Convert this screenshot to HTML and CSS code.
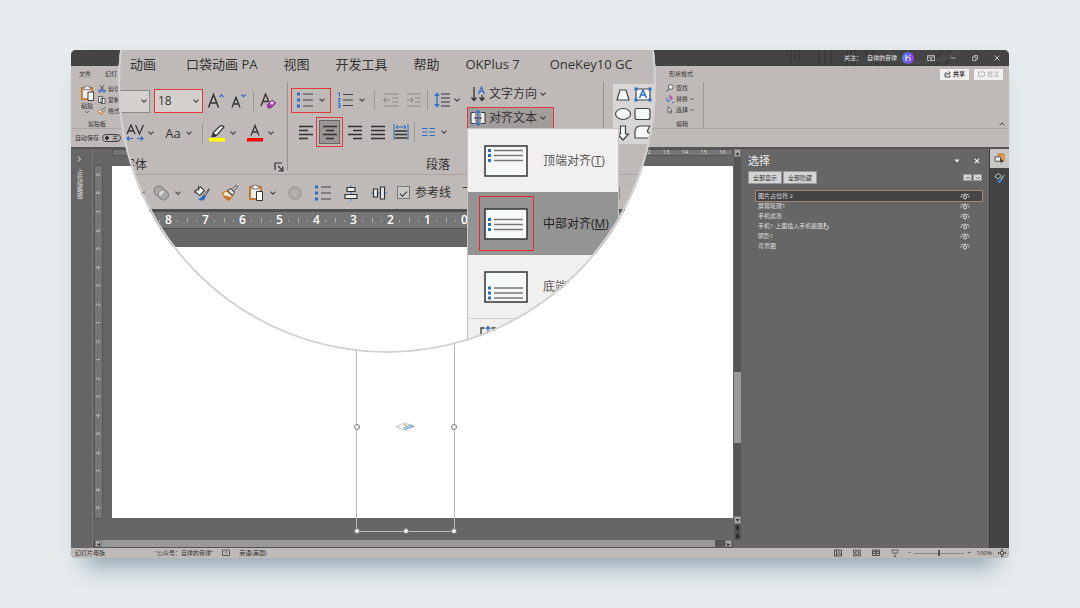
FILE: index.html
```html
<!DOCTYPE html>
<html lang="zh-CN">
<head>
<meta charset="utf-8">
<title>幻灯片母版</title>
<link rel="stylesheet" href="styles.css">
</head>
<body>
<svg class="defs" aria-hidden="true">
  <symbol id="chev" viewBox="0 0 6 6"><path d="M.5 1.700 3 4.200 5.500 1.700" fill="none" stroke="#444" stroke-width="1.200"/></symbol>
  <symbol id="eye" viewBox="0 0 10 7"><path d="M.6 4.500C2.500 0 7.500 0 9.400 4.500M2.500 2 1.500 1M7.500 2l1-1" fill="none" stroke="#ddd" stroke-width=".9"/><circle cx="5" cy="4.300" r="1.600" fill="none" stroke="#ddd" stroke-width="1"/></symbol>
  <symbol id="lines-l" viewBox="0 0 16 16"><path d="M1 2.500h14M1 6.500h9M1 10.500h14M1 14.500h9" stroke="#333" stroke-width="1.300"/></symbol>
  <symbol id="lines-c" viewBox="0 0 16 16"><path d="M1 2.500h14M4 6.500h8M1 10.500h14M4 14.500h8" stroke="#333" stroke-width="1.300"/></symbol>
  <symbol id="lines-r" viewBox="0 0 16 16"><path d="M1 2.500h14M6 6.500h9M1 10.500h14M6 14.500h9" stroke="#333" stroke-width="1.300"/></symbol>
  <symbol id="lines-j" viewBox="0 0 16 16"><path d="M1 2.500h14M1 6.500h14M1 10.500h14M1 14.500h14" stroke="#333" stroke-width="1.300"/></symbol>
  <symbol id="bul" viewBox="0 0 16 16"><path d="M0 .5h3v3H0zM0 6.500h3v3H0zM0 12.500h3v3H0z" fill="#2b6cc4"/><path d="M6 2h10M6 8h10M6 14h10" stroke="#444" stroke-width="1.200"/></symbol>
  <symbol id="pastei" viewBox="0 0 16 18"><path d="M2 3h11v12H2z" fill="#eee" stroke="#c47a2e" stroke-width="2"/><path d="M4 2h2q1.500-3 3 0h2v3H4z" fill="#eee" stroke="#555" stroke-width=".8"/><path d="M8.500 7.500h6v9h-6z" fill="#f4f8f7" stroke="#333"/></symbol>
  <symbol id="brushi" viewBox="0 0 16 16"><path d="m.5 7.500 4.500-1.500 5.500 5-3.500 4.500Q2 13 .5 7.500z" fill="#f6e7d4" stroke="#c47a2e" stroke-width="1.200"/><path d="m2 10.500 7.500 1.500-2.500 3.500Q3 14 2 10.500z" fill="#c9752a"/><path d="m5.500 5.500 5 5 2-3-3.500-4z" fill="#ddd" stroke="#333"/><path d="m10 4.500 4-4 1.500 1.500-4 4z" fill="#eee" stroke="#333"/></symbol>
  <symbol id="filli" viewBox="0 0 17 17"><path d="m2 6 5-4 4 4-5 5-4-3z" fill="#eef2f2" stroke="#333" stroke-width="1.100"/><path d="M5 1v5M1 5v4" stroke="#333"/><path d="m16 4-6 7 2 1 4-7z" fill="#ddd" stroke="#333" stroke-width=".9"/><path d="M12 13c-1-3-3-2-4 0s-2 2-3 2q5 3 7-2z" fill="#2b6cc4" stroke="#2b6cc4"/></symbol>
</svg>

<main class="app">
  <header class="titlebar">
    <svg class="deco" viewBox="0 0 180 16" aria-hidden="true"><path d="M2 0v8M6 0v13M10 0v9M14 0v11M34 0v16M40 0v16M46 0v16M62 0v16M66 0v14M70 0v16" stroke="#3a3a3a" stroke-width="2"/><path d="m78 0 16 16M86 0l16 16M142 16l16-16M150 16l16-16M158 16l16-16" stroke="#3c3c3c" stroke-width="3"/><path d="M104 0q8 14 34 12T174 0" fill="none" stroke="#4a4a4a" stroke-width="4"/></svg>
    <span>关注：</span><span>自律的音律</span>
    <span class="avatar"><svg viewBox="0 0 12 12"><path d="M4 3v6M4 6q3-2 4 0v3M8 4V3" stroke="#fff" fill="none"/></svg></span>
    <nav class="winctl">
      <button aria-label="功能区选项"><svg viewBox="0 0 8 8"><path d="M.5 1.500h7v5h-7zM.5 3h7M4 6V4M3 5l1-1 1 1" fill="none" stroke="#ccc" stroke-width=".8"/></svg></button>
      <button aria-label="最小化"><svg viewBox="0 0 8 8"><path d="M1.500 4h5" stroke="#ccc" stroke-width=".8"/></svg></button>
      <button aria-label="还原"><svg viewBox="0 0 8 8"><path d="M1.500 3h3.500v3.500H1.500zM3 3V1.500h3.500V5H5" fill="none" stroke="#ccc" stroke-width=".8"/></svg></button>
      <button aria-label="关闭"><svg viewBox="0 0 8 8"><path d="m1.500 1.500 5 5m0-5-5 5" stroke="#ddd" stroke-width=".8"/></svg></button>
    </nav>
  </header>

  <nav class="tabs">
    <div class="tabs-left"><button>文件</button><button>幻灯</button></div>
    <button class="tab-format">形状格式</button>
    <div class="share">
      <button><svg viewBox="0 0 7 7"><path d="M3 2H1v4h5V4M2.500 4.500Q3 2 6 2M4.500.5 6.300 2 4.500 3.500" fill="none" stroke="#333" stroke-width=".8"/></svg><b>共享</b></button>
      <button class="off"><svg viewBox="0 0 7 7"><path d="M.5 1h6v4H3L2 6.300V5H.5z" fill="none" stroke="#aaa" stroke-width=".8"/></svg>批注</button>
    </div>
  </nav>

  <section class="ribbon">
    <div class="clip">
      <button class="paste"><svg viewBox="0 0 16 18"><use href="#pastei"/></svg>粘贴<svg class="c4"><use href="#chev"/></svg></button>
      <div class="clip-list">
        <button><svg viewBox="0 0 8 8"><path d="m2 0 3 5M6 0 3 5" stroke="#444" stroke-width=".8"/><circle cx="2" cy="6" r="1.300" fill="none" stroke="#2b6cc4"/><circle cx="6" cy="6" r="1.300" fill="none" stroke="#2b6cc4"/></svg>剪切</button>
        <button><svg viewBox="0 0 8 8"><path d="M.5.5h4v6h-4zM3 2.500h4v5H3z" fill="#eee" stroke="#444" stroke-width=".8"/></svg>复制</button>
        <button><svg viewBox="0 0 16 16"><use href="#brushi"/></svg>格式</button>
      </div>
      <span class="gl">剪贴板</span>
    </div>
    <div class="edit">
      <button><svg viewBox="0 0 8 8"><circle cx="4.800" cy="3" r="2.400" fill="#eee" stroke="#444" stroke-width=".8"/><path d="M3 5 .5 7.500" stroke="#444"/></svg>查找</button>
      <button><svg viewBox="0 0 8 8"><path d="M4 0v4h2V2H4" fill="none" stroke="#a33fa5"/><path d="M1 3v3h3M6 7.500H8" fill="none" stroke="#2b6cc4"/></svg>替换 <svg class="c4"><use href="#chev"/></svg></button>
      <button><svg viewBox="0 0 8 8"><path d="M2 .5v6l1.500-1 1 2 1-.5-1-2H6z" fill="#eee" stroke="#444" stroke-width=".8"/></svg>选择 <svg class="c4"><use href="#chev"/></svg></button>
      <span class="gl">编辑</span>
    </div>
    <button class="fold" aria-label="折叠功能区"><svg viewBox="0 0 6 6"><path d="M.5 4.300 3 1.800l2.500 2.500" fill="none" stroke="#444"/></svg></button>
  </section>

  <div class="autosave"><label for="as">自动保存</label><input type="checkbox" id="as" class="toggle"><span class="togtext">关</span></div>

  <section class="work">
    <aside class="thumbs"><button aria-label="展开"><svg viewBox="0 0 5 6"><path d="m1 .5 2.500 2.500L1 5.500" fill="none" stroke="#eee"/></svg></button><span>占位缩略图</span></aside>
    <div class="stage">
      <div class="hruler" id="hr"></div>
      <div class="vruler" id="vr"></div>
      <div class="slide"></div>
      <div class="vscroll"><button aria-label="上">▴</button><i></i><button aria-label="下">▾</button><button class="pg" aria-label="上一张">⬆</button><button class="pg" aria-label="下一张">⬇</button></div>
      <div class="hscroll"><button aria-label="左">◂</button><i></i><button aria-label="右">▸</button></div>
      <div class="selbox"><b class="ml"></b><b class="mr"></b><b class="bl s"></b><b class="bm s"></b><b class="br s"></b>
        <svg viewBox="0 0 20 9"><path d="M1 4.500 10 .8l9 3.700-9 3.700z" fill="none" stroke="#bbb" stroke-width=".8"/><path d="m9 6 6-3 4 1.500-5 1-4 2z" fill="#cfe0f2" stroke="#5b93cf" stroke-width=".8"/><path d="m8 2 4 1.500-2 .5" stroke="#e3b36b" fill="none"/></svg></div>
    </div>
    <aside class="pane">
      <div class="pane-head"><h2>选择</h2><button aria-label="选项"><svg viewBox="0 0 6 6"><path d="M.5 1.500h5L3 4.500z" fill="#eee"/></svg></button><button aria-label="关闭"><svg viewBox="0 0 6 6"><path d="m.8.8 4.400 4.400m0-4.400L.8 5.200" stroke="#eee" stroke-width="1.200"/></svg></button></div>
      <div class="pane-btns"><button>全部显示</button><button>全部隐藏</button><span></span><button class="sm" aria-label="上移"><svg viewBox="0 0 6 6"><path d="m1 4 2-2 2 2" fill="none" stroke="#777"/></svg></button><button class="sm" aria-label="下移"><svg viewBox="0 0 6 6"><path d="m1 2 2 2 2-2" fill="none" stroke="#777"/></svg></button></div>
      <ul class="objs">
        <li class="on">图片占位符 2<svg><use href="#eye"/></svg></li>
        <li>屏幕轮廓1<svg><use href="#eye"/></svg></li>
        <li>手机遮罩<svg><use href="#eye"/></svg></li>
        <li><span class="hand">手机1-上面插入手机截图<svg viewBox="0 0 6 8"><path d="M1.500 5V1q.7-.8 1.200 0v2.500l2.500.8V6.500L4.500 7.500h-2L.7 5z" fill="none" stroke="#ddd" stroke-width=".8"/></svg></span><svg><use href="#eye"/></svg></li>
        <li>阴影1<svg><use href="#eye"/></svg></li>
        <li>背景图<svg><use href="#eye"/></svg></li>
      </ul>
    </aside>
    <aside class="rail">
      <button class="on" aria-label="选择窗格"><svg viewBox="0 0 10 10"><path d="M4 1h5v6H4z" fill="#e8a04c" stroke="#c47a2e"/><path d="M1 3.500h5v4H1z" fill="#eee" stroke="#444" stroke-width=".8"/><path d="m6 5 3 3-2 .2-1 1.300z" fill="#333"/></svg></button>
      <button aria-label="设置格式"><svg viewBox="0 0 17 17"><path d="m2 6 5-4 4 4-5 5-4-3z" fill="none" stroke="#ddd" stroke-width="1.300"/><path d="m16 4-6 7 2 1 4-7z" fill="#ddd"/><path d="M12 13c-1-3-3-2-4 0s-2 2-3 2q5 3 7-2z" fill="#3c8ad8" stroke="#3c8ad8"/></svg></button>
    </aside>
  </section>

  <footer class="status">
    <span class="st1">幻灯片母版</span><span>“公众号：自律的音律”</span>
    <svg viewBox="0 0 8 8"><path d="M.5 1h3l.5.500.5-.5h3v5.500h-7zM4 2v3" fill="none" stroke="#444" stroke-width=".8"/></svg><span>英语(美国)</span>
    <div class="views">
      <button aria-label="普通"><svg viewBox="0 0 8 8"><path d="M.5 1h7v6h-7zM2.500 1v6M2.500 5h5M4 3h2" fill="none" stroke="#444" stroke-width=".9"/></svg></button>
      <button aria-label="浏览"><svg viewBox="0 0 8 8"><path d="M.5 1h2.700v2.300H.5zM4.800 1h2.700v2.300H4.800zM.5 4.800h2.700V7H.5zM4.800 4.800h2.700V7H4.800z" fill="none" stroke="#444" stroke-width=".8"/></svg></button>
      <button aria-label="阅读"><svg viewBox="0 0 8 8"><path d="M.5 1h7v5.500h-7zM4 1v6M1 2.700h6M1 4.300h6" fill="none" stroke="#444" stroke-width=".9"/></svg></button>
      <button aria-label="放映"><svg viewBox="0 0 8 8"><path d="M.5 1h7M1.200 1v3h5.600V1M4 4v3.500M2.500 7.500h3" fill="none" stroke="#555" stroke-width=".8"/></svg></button>
    </div>
    <div class="zoom"><span>−</span><input type="range" aria-label="缩放"><span>+</span><span class="pct">100%</span>
      <svg viewBox="0 0 8 8"><path d="M2.500 2.500h3v3h-3zM4 0v2M4 6v2M0 4h2M6 4h2M3 1l1-1 1 1M3 7l1 1 1-1M1 3 0 4l1 1M7 3l1 1-1 1" fill="none" stroke="#444" stroke-width=".8"/></svg></div>
  </footer>

  <section class="lens">
    <nav class="l-tabs"><span>动画</span><span class="gapped">口袋动画 PA</span><span>视图</span><span>开发工具</span><span>帮助</span><span>OKPlus 7</span><span class="gapped">OneKey10 GC</span></nav>
    <div class="l-ribbon">
      <div class="g-font">
        <div class="row r1">
          <button class="fname" aria-label="字体"><svg class="c"><use href="#chev"/></svg></button>
          <button class="fsize red"><span>18</span><svg class="c"><use href="#chev"/></svg></button>
          <button class="w18" aria-label="增大字号"><svg viewBox="0 0 18 18"><path d="m1.500 15.500 5-13 5 13M3.300 11h6.400" fill="none" stroke="#333" stroke-width="1.500"/><path d="m12.500 5 2-2.200 2 2.200" fill="none" stroke="#2b6cc4" stroke-width="1.200"/></svg></button>
          <button class="w20" aria-label="减小字号"><svg viewBox="0 0 18 18"><path d="m2 15.500 4-10 4 10M3.500 12h5" fill="none" stroke="#333" stroke-width="1.400"/><path d="m11.500 2.500 2 2.200 2-2.200" fill="none" stroke="#2b6cc4" stroke-width="1.200"/></svg></button>
          <i class="sep"></i>
          <button class="w20" aria-label="清除格式"><svg viewBox="0 0 18 18"><path d="m2 14 4.500-12L10 10M4 9.500h5" fill="none" stroke="#333" stroke-width="1.400"/><path d="m8 13 5-5 4 3-5 5H9z" fill="#a33fa5" stroke="#873a8c"/><path d="m11 11 2-2 2 2-2 2z" fill="#f0dff2"/></svg></button>
        </div>
        <div class="row r2">
          <button class="tool"><svg viewBox="0 0 18 18"><path d="m1 10 4-9 4 9M2.500 7h5M9.500 1l4 9 4-9" fill="none" stroke="#333" stroke-width="1.300"/><path d="M1 14.500h6M3 12.500l-2 2 2 2M11 14.500h6M15 12.500l2 2-2 2" fill="none" stroke="#2b6cc4" stroke-width="1.200"/></svg><svg class="c"><use href="#chev"/></svg></button>
          <button class="tool"><span class="aa">Aa</span><svg class="c"><use href="#chev"/></svg></button>
          <i class="sep"></i>
          <button class="tool"><svg viewBox="0 0 18 18"><path d="M1 14h16v3.500H1z" fill="#ff0"/><path d="m5 9 7-7q3-1 4 1l-7 8-3 1z" fill="#eee" stroke="#333" stroke-width="1.300"/><path d="m5 9-2 4h4l2-2z" fill="#333"/></svg><svg class="c"><use href="#chev"/></svg></button>
          <button class="tool"><svg viewBox="0 0 18 18"><path d="M1 14h16v3.500H1z" fill="#f00"/><path d="m5 11.500 4-10 4 10M6.300 8h5.400" fill="none" stroke="#333" stroke-width="1.300"/></svg><svg class="c"><use href="#chev"/></svg></button>
        </div>
        <div class="row r3"><span>字体</span><button aria-label="字体设置"><svg viewBox="0 0 10 10"><path d="M1 8V1h7M4 4l4.500 4.500M8.800 4.500V9H4.500" fill="none" stroke="#333" stroke-width="1.200"/></svg></button></div>
      </div>
      <div class="g-para">
        <div class="p-left">
          <div class="row r1">
            <button class="bullets red"><svg viewBox="0 0 16 16"><use href="#bul"/></svg><svg class="c"><use href="#chev"/></svg></button>
            <button class="numb"><svg viewBox="0 0 16 16"><path d="M1 1h1.500v3.500M1 6.500h2v1.500l-2 1.500h2M1 11.500h2v4H1m0-2h2" fill="none" stroke="#2b6cc4"/><path d="M6 2.500h10M6 8h10M6 13.500h10" stroke="#444" stroke-width="1.200"/></svg><svg class="c"><use href="#chev"/></svg></button>
            <i class="sep"></i>
            <button class="w23" aria-label="减少缩进"><svg viewBox="0 0 16 16"><path d="M1 2h14M9 6h6M9 10h6M1 14h14M7 8H1m2-2L1 8l2 2" fill="none" stroke="#8d8a88" stroke-width="1.200"/></svg></button>
            <button class="w23" aria-label="增加缩进"><svg viewBox="0 0 16 16"><path d="M1 2h14M9 6h6M9 10h6M1 14h14M1 8h6M5 6l2 2-2 2" fill="none" stroke="#8d8a88" stroke-width="1.200"/></svg></button>
            <i class="sep"></i>
            <button class="ls"><svg viewBox="0 0 16 16"><path d="M3 1v14M.8 4 3 1.500 5.200 4M.8 12 3 14.500 5.200 12" fill="none" stroke="#2b6cc4" stroke-width="1.200"/><path d="M7 2h9M7 6h9M7 10h9M7 14h9" stroke="#333" stroke-width="1.200"/></svg><svg class="c"><use href="#chev"/></svg></button>
          </div>
          <div class="row r2">
            <button class="w20" aria-label="左对齐"><svg><use href="#lines-l"/></svg></button>
            <button class="centre red" aria-label="居中"><span><svg><use href="#lines-c"/></svg></span></button>
            <button class="w23" aria-label="右对齐"><svg><use href="#lines-r"/></svg></button>
            <button class="w23" aria-label="两端对齐"><svg><use href="#lines-j"/></svg></button>
            <button class="w23" aria-label="分散对齐"><svg viewBox="0 0 16 16"><path d="M1 0v16M15 0v16M3 3h10M5 1 3 3l2 2M11 1l2 2-2 2" fill="none" stroke="#2b6cc4"/><path d="M2 7h12M2 10.500h12M2 14h12" stroke="#333" stroke-width="1.300"/></svg></button>
            <i class="sep"></i>
            <button class="cols"><svg viewBox="0 0 16 16"><path d="M1 4.500h5.500M1 8h5.500M1 11.500h5.500M8.500 4.500H14M8.500 8H14M8.500 11.500H14" stroke="#2b6cc4" stroke-width="1.200"/></svg><svg class="c"><use href="#chev"/></svg></button>
          </div>
          <div class="row r3"><span>段落</span></div>
        </div>
        <div class="p-right">
          <button class="tdir"><svg viewBox="0 0 16 16"><path d="M4 1v13M1.500 11.500 4 14.500l2.500-3M12 9v5M9.500 11.500l2.500 3 2.500-3" fill="none" stroke="#333" stroke-width="1.300"/><path d="m8.500 8 3-7 3 7M9.500 5.500h4" fill="none" stroke="#2b6cc4" stroke-width="1.200"/></svg>文字方向<svg class="c"><use href="#chev"/></svg></button>
          <button class="talign red"><svg viewBox="0 0 16 16"><path d="M5 3H1v10h4zM11 3h4v10h-4z" fill="#eee"/><path d="M4.500 2.500H1v11h3.500M11.500 2.500H15v11h-3.500M4 8h8" fill="none" stroke="#333"/><path d="M8 0v16M5.800 3 8 .7 10.200 3M5.800 13 8 15.300l2.200-2.300" fill="none" stroke="#2b6cc4" stroke-width="1.200"/></svg>对齐文本<svg class="c"><use href="#chev"/></svg></button>
        </div>
      </div>
      <div class="g-shape"><svg viewBox="0 0 42 60"><g fill="#f4f8f7" stroke="#444" stroke-width="1.200"><path d="m4 16 3-10h6l3 10z"/><path d="M23 5h14v11H23z"/><ellipse cx="10" cy="30" rx="7.500" ry="5.500"/><rect x="22" y="24.500" width="15" height="11" rx="2"/><path d="M7.500 42h5v8h3L10 56l-5.500-6h3z"/><path d="M22 54V47q1-5 5-5h10q-5 7 0 7v5z"/></g><path d="m26.500 14 3.500-8 3.500 8m-6-3h5" fill="none" stroke="#2b6cc4" stroke-width="1.500"/><path d="M21.500 3.500h3v3h-3zM35.500 3.500h3v3h-3zM21.500 14.500h3v3h-3zM35.500 14.500h3v3h-3z" fill="#2b6cc4"/></svg></div>
    </div>
    <div class="l-quick">
      <svg class="c"><use href="#chev"/></svg>
      <button class="q"><svg viewBox="0 0 16 16"><circle cx="6" cy="6" r="5" fill="#aaa7a5" stroke="#7d7a78"/><circle cx="10.500" cy="10" r="5" fill="#aaa7a5" stroke="#7d7a78"/><path d="M10.800 5q.5 4-4.800 6-1-5 4.800-6z" fill="#ddd"/></svg><svg class="c"><use href="#chev"/></svg></button>
      <button class="q1"><svg><use href="#filli"/></svg></button>
      <button class="q1"><svg><use href="#brushi"/></svg></button>
      <button class="q tall"><svg><use href="#pastei"/></svg><svg class="c"><use href="#chev"/></svg></button>
      <button class="q1"><svg viewBox="0 0 16 16"><circle cx="8" cy="8" r="5.500" fill="#b5b1ae" stroke="#a5a2a0" stroke-width="3"/></svg></button>
      <button class="q1"><svg><use href="#bul"/></svg></button>
      <button class="q1"><svg viewBox="0 0 16 16"><path d="M8 0v16" stroke="#3c86d8"/><path d="M4 2.500h8v4H4zM2 9.500h12v4H2z" fill="#eee" stroke="#333" stroke-width="1.200"/></svg></button>
      <button class="q1"><svg viewBox="0 0 16 16"><path d="M0 8h16" stroke="#3c86d8"/><path d="M2.500 4h4v8h-4zM9.500 2h4v12h-4z" fill="#eee" stroke="#333" stroke-width="1.200"/></svg></button>
      <label class="guide"><input type="checkbox" checked>参考线</label><span class="next">下</span><i class="bar"></i>
    </div>
    <div class="l-ruler"><b>8</b><b>7</b><b>6</b><b>5</b><b>4</b><b>3</b><b>2</b><b>1</b><b>0</b></div>
    <div class="l-gap"></div>
    <div class="menu">
      <button><svg viewBox="0 0 44 32"><path d="M1 1h42v30H1z" fill="#f4f9f8" stroke="#333" stroke-width="1.500"/><path d="M10 5.500h29M10 10.500h29M10 15.500h29" stroke="#777" stroke-width="1.500"/><path d="M4 4h3v3H4zM4 9h3v3H4zM4 14h3v3H4z" fill="#2b6cc4"/></svg><span>顶端对齐(<u>T</u>)</span></button>
      <button class="on"><svg viewBox="0 0 44 32"><path d="M1 1h42v30H1z" fill="#f4f9f8" stroke="#333" stroke-width="1.500"/><path d="M10 11.500h29M10 16.500h29M10 21.500h29" stroke="#777" stroke-width="1.500"/><path d="M4 10h3v3H4zM4 15h3v3H4zM4 20h3v3H4z" fill="#2b6cc4"/></svg><span>中部对齐(<u>M</u>)</span></button>
      <button><svg viewBox="0 0 44 32"><path d="M1 1h42v30H1z" fill="#f4f9f8" stroke="#333" stroke-width="1.500"/><path d="M10 17h29M10 22h29M10 27h29" stroke="#777" stroke-width="1.500"/><path d="M4 15.500h3v3H4zM4 20.500h3v3H4zM4 25.500h3v3H4z" fill="#2b6cc4"/></svg><span>底端对齐</span></button>
      <button class="more" aria-label="其他选项"><svg viewBox="0 0 16 16"><path d="M4.500 2H1v12h3.500M11.500 2H15v12h-3.500" fill="none" stroke="#333" stroke-width="1.300"/><path d="M8 0v16M5.800 3 8 .7 10.200 3" fill="none" stroke="#2b6cc4" stroke-width="1.300"/></svg></button>
    </div>
  </section>
</main>
<script src="rulers.js"></script>
</body>
</html>
```
FILE: rulers.js
```js
// Marks below `from` stay blank: the lens covers that part of the ruler.
function fillRuler(id, max, from) {
  const ruler = document.getElementById(id);
  for (let n = -max; n <= max; n++) {
    const mark = document.createElement('span');
    if (n >= from) mark.textContent = Math.abs(n);
    ruler.appendChild(mark);
  }
}
fillRuler('hr', 16, 12);
fillRuler('vr', 9, -9);
```
FILE: styles.css
```css
*, *::before, *::after { box-sizing: border-box; }
body {
  margin: 0;
  padding: 50px 71px;
  min-height: 100vh;
  background: #e6ebee;
  font-family: "Open Sans", "Noto Sans CJK SC", sans-serif;
  font-size: 6px;
  line-height: 8px;
  color: #333;
}
button { font: inherit; color: inherit; background: none; border: 0; padding: 0; margin: 0; display: flex; align-items: center; }
svg { display: block; flex: none; }
.defs { position: absolute; width: 0; height: 0; }
.c { width: 6px; height: 6px; }
.c4 { width: 4px; height: 4px; }

.app {
  position: relative;
  display: flex;
  flex-direction: column;
  min-height: calc(100vh - 100px);
  border-radius: 5px;
  overflow: hidden;
  background: #666;
}
body::before {
  content: "";
  position: absolute;
  z-index: -1;
  inset: 60px 84px 52px;
  border-radius: 5px;
  box-shadow: 0 10px 24px #8fa0ab;
}

.titlebar { position: relative; display: flex; align-items: center; justify-content: flex-end; gap: 5px; height: 16px; background: #444; color: #eee; padding-right: 8px; }
.deco { position: absolute; right: 44px; top: 0; width: 180px; height: 16px; }
.titlebar > span { position: relative; }
.avatar { width: 12px; height: 12px; border-radius: 50%; background: linear-gradient(100deg, #3d8bf5, #a333e8); }
.winctl { position: relative; display: flex; gap: 14px; padding-left: 8px; }
.winctl svg { width: 8px; height: 8px; }

.tabs, .ribbon { display: grid; grid-template-columns: 47px 538px 1fr; background: #bfbab7; }
.tabs { grid-template-columns: 47px 551px auto 1fr; height: 16px; align-items: center; }
.tabs-left { display: flex; gap: 14px; padding-left: 8px; }
.tabs-left button { flex: none; }
.tab-format { grid-column: 3; }
.share { display: flex; justify-content: flex-end; gap: 5px; padding-right: 6px; }
.share button { background: #f1f0ef; height: 11px; padding: 0 4px; gap: 2px; }
.share .off { color: #aaa; }
.share svg { width: 7px; height: 7px; }

.ribbon { height: 47px; border-bottom: 1px solid #aaa6a3; position: relative; }
.clip { display: grid; grid-template-columns: 22px 1fr; grid-template-rows: 36px 1fr; padding: 2px 0 0 5px; }
.paste { flex-direction: column; padding-top: 1px; }
.paste > svg:first-child { width: 15px; height: 17px; }
.clip-list { display: flex; flex-direction: column; gap: 3px; padding-top: 1px; }
.clip-list button, .edit button { gap: 2px; white-space: nowrap; height: 8px; }
.clip-list svg, .edit button > svg:first-child { width: 8px; height: 8px; }
.gl { grid-column: 1 / -1; text-align: center; padding-right: 2px; }
.edit { grid-column: 3; justify-self: start; display: flex; flex-direction: column; gap: 3px; width: 48px; margin-bottom: 2px; padding: 2px 0 0 10px; border-right: 1px solid #9d9997; }
.edit .gl { text-align: left; padding: 3px 0 0 10px; }
.fold { position: absolute; right: 4px; bottom: 1px; }
.fold svg { width: 6px; height: 6px; }

.autosave { display: flex; align-items: center; gap: 3px; height: 20px; padding-left: 4px; background: #bfbab7; border-bottom: 2px solid #555; }
.toggle { appearance: none; width: 19px; height: 8px; margin: 0; border: 1px solid #444; border-radius: 4px; background: radial-gradient(circle at 4px 3px, #333 2px, transparent 2px); }
.togtext { margin-left: -12px; }

.work { flex: 1; display: grid; grid-template-columns: 22px 1fr 247px 20px; color: #ddd; }
.thumbs { display: flex; flex-direction: column; align-items: center; gap: 7px; padding: 7px 4px 0 0; border-right: 1px solid #777; }
.thumbs svg { width: 5px; height: 6px; }
.thumbs span { writing-mode: vertical-rl; }

.stage { position: relative; display: grid; grid-template-columns: 19px 1fr 9px; grid-template-rows: 17px 1fr 22px 8px; }
.hruler { grid-area: 1 / 2; display: flex; height: 7px; background: #757575; border: 1px solid #555; line-height: 5px; }
.hruler span { flex: 1; text-align: center; }
.vruler { grid-area: 2 / 1; display: flex; flex-direction: column-reverse; margin-left: 2px; width: 7px; background: #757575; outline: 1px solid #555; }
.vruler span { flex: 1; writing-mode: vertical-rl; transform: rotate(180deg); text-align: center; line-height: 7px; }
.slide { grid-area: 2 / 2; background: #fff; }
.vscroll { grid-area: 1 / 3 / 4 / 4; display: grid; grid-template-rows: 8px 1fr 8px 8px 8px; margin: 0 1px; background: #555; }
.vscroll i { background: #999; align-self: end; height: 71px; margin-bottom: 73px; }
.vscroll button, .hscroll button { background: #aaa; color: #222; justify-content: center; border: 1px solid #777; line-height: 4px; overflow: hidden; }
.vscroll .pg { background: none; border: 0; }
.hscroll { grid-area: 4 / 1 / 5 / 3; display: grid; grid-template-columns: 7px 1fr 10px 7px; padding: 0 1px 1px 2px; background: #555; }
.hscroll i { background: #999; }
.hscroll button:last-child { grid-column: 4; }
.selbox { position: absolute; left: 263px; top: 180px; bottom: 16px; width: 99px; border: 1px solid #bbb; border-top: 0; }
.selbox svg { position: absolute; left: 38px; top: 93px; width: 20px; height: 9px; }
.selbox b { position: absolute; width: 6px; height: 6px; border-radius: 50%; border: 1px solid #777; background: #fff; }
.selbox .ml { left: -3px; top: 95px; }
.selbox .mr { right: -3px; top: 95px; }
.selbox .s { bottom: -3px; }
.selbox .bl { left: -3px; }
.selbox .bm { left: 46px; }
.selbox .br { right: -3px; }

.pane { padding: 5px 7px 0 6px; }
.pane-head { display: flex; align-items: center; gap: 14px; padding-right: 2px; }
.pane-head h2 { flex: 1; margin: 0; font-size: 11px; line-height: 14px; font-weight: 400; color: #eee; }
.pane-head svg { width: 6px; height: 6px; }
.pane-btns { display: flex; align-items: center; gap: 1px; margin-top: 3px; }
.pane-btns button { height: 13px; padding: 0 4px; background: #d4d4d4; color: #333; border: 1px solid #999; }
.pane-btns span { flex: 1; }
.pane-btns .sm { width: 9px; height: 7px; padding: 0; justify-content: center; }
.sm svg { width: 6px; height: 6px; }
.objs { list-style: none; margin: 7px 0 0 8px; padding: 0; line-height: 10px; font-size: 6px; }
.objs li { display: flex; align-items: center; justify-content: space-between; height: 10px; padding: 0 12px 0 2px; }
.objs .on { background: #444; outline: 1px solid #a58673; }
.objs svg { width: 10px; height: 7px; }
.hand { display: flex; align-items: center; }
.hand svg { width: 6px; height: 8px; }
.rail { background: #444; border-left: 1px solid #3c3c3c; }
.rail button { width: 100%; height: 19px; justify-content: center; }
.rail .on { background: #c9c6c4; }
.rail svg { width: 11px; height: 11px; }

.status { display: flex; align-items: center; height: 10px; gap: 9px; padding: 0 3px 0 4px; background: #bfbab7; }
.status svg { width: 8px; height: 8px; }
.st1 { margin-right: 41px; }
.views { display: flex; gap: 11px; margin-left: auto; }
.zoom { display: flex; align-items: center; gap: 3px; }
.zoom input { appearance: none; width: 50px; height: 7px; margin: 0; background: linear-gradient(#888, #888) center / 100% 1px no-repeat; }
.zoom input::-webkit-slider-thumb { appearance: none; width: 2px; height: 6px; background: #555; }
.pct { padding: 0 3px; }

.lens {
  position: absolute;
  left: 47px;
  top: 0;
  width: 538px;
  height: 304px;
  clip-path: circle(269px at 269px 34px);
  background: #fff;
  font-size: 12px;
  line-height: 16px;
}
.lens::after { content: ""; position: absolute; left: 0; top: -235px; width: 538px; height: 538px; border: 2px solid #d2d2d2; border-radius: 50%; pointer-events: none; }
.l-tabs { display: flex; gap: 26px; padding: 6px 0 10px 12px; background: #bfbab7; font-size: 13px; white-space: nowrap; }
.gapped { margin-left: 4px; }
.l-ribbon { display: flex; height: 93px; background: #bfbab7; border-bottom: 1px solid #a8a4a1; }
.l-ribbon svg:not(.c) { width: 16px; height: 16px; }
.row { display: flex; align-items: center; }
.row button { justify-content: center; }
.r1 { height: 24px; margin-top: 7px; }
.r2 { height: 29px; margin-top: 5px; }
.r3 { height: 16px; margin-top: 10px; }
.sep { width: 1px; height: 20px; background: #9d9997; }
.red { border: 1px solid #e5383b; }
.w18 { width: 18px; }
.w20 { width: 20px; }
.w23 { width: 23px; }
.g-font { width: 170px; height: 88px; border-right: 1px solid #969290; }
.g-font .r1 { gap: 4px; }
.g-font .row svg:not(.c) { width: 18px; height: 18px; }
.g-font .r2 { padding-left: 8px; }
.g-font .r2 .sep { margin-right: 5px; }
.fname { width: 32px; height: 23px; border: 1px solid #8d8a88; background: #d3d0ce; padding-left: 20px; }
.row .fsize { width: 49px; height: 24px; background: #d3d0ce; justify-content: space-between; padding: 0 3px; font-size: 12px; }
.tool { width: 38px; gap: 4px; }
.row .tool { justify-content: flex-start; }
.aa { font-size: 13px; width: 18px; }
.g-font .r3 { justify-content: space-between; padding: 0 3px 0 5px; }
.g-font .r3 button svg:not(.c) { width: 10px; height: 10px; margin-top: 3px; }
.g-para { display: flex; width: 316px; height: 88px; border-right: 1px solid #969290; }
.p-left { width: 179px; }
.g-para .r1 { padding-left: 3px; margin-top: 6px; }
.bullets { width: 40px; height: 25px; gap: 6px; }
.numb { margin-left: 5px; gap: 6px; }
.r1 .numb { width: 30px; }
.numb + .sep { margin: 0 4px 0 8px; }
.w23 + .sep { margin-left: 2px; }
.ls { width: 38px; gap: 4px; }
.g-para .r2 { padding-left: 8px; }
.centre { width: 27px; height: 30px; }
.centre span { display: grid; place-items: center; width: 21px; height: 24px; background: #999694; border: 1px solid #666; }
.cols { width: 38px; gap: 4px; }
.g-para .r3 { justify-content: flex-end; padding-right: 17px; margin-top: 11px; }
.tdir, .talign { gap: 3px; height: 22px; padding: 0 2px; }
.p-right button { white-space: nowrap; }
.talign { width: 87px; background: #a09d9b; margin-top: 2px; }
.tdir { padding-left: 3px; margin-top: 1px; }
.g-shape { padding: 2px 0 0 9px; }
.l-ribbon .g-shape svg { width: 42px; height: 60px; background: #d8d6d5; }
.l-quick { display: flex; align-items: center; height: 34px; padding: 1px 36px 0 21px; background: #bfbab7; }
.l-quick svg:not(.c) { width: 16px; height: 16px; }
.l-quick .tall svg:not(.c) { height: 18px; }
.q { width: 40px; gap: 6px; padding-left: 4px; margin-left: 4px; }
.q1 { width: 28px; justify-content: center; }
.q + .q1 { margin-left: -1px; }
.q1 + .q { margin-left: 0; }
.tall + .q1 { margin-left: -3px; }
.guide { display: flex; align-items: center; gap: 5px; margin-left: 4px; }
.guide input { appearance: none; width: 13px; height: 13px; margin: 0; border: 1px solid #777; background: #cbc8c6; display: grid; place-items: center; }
.guide input::after { content: ""; width: 7px; height: 4px; border: solid #333; border-width: 0 0 1px 1px; transform: rotate(-45deg); }
.next { margin-left: 11px; }
.bar { width: 2px; height: 12px; margin-left: auto; background: #888; }
.l-ruler { display: flex; height: 20px; padding-left: 32px; background: #757575; border-top: 3px solid #505050; border-bottom: 1px solid #505050; color: #fff; font-size: 12px; }
.l-ruler b { width: 37px; text-align: center; font-weight: 600; background: linear-gradient(#aaa, #aaa) 0 6px / 1px 5px no-repeat, linear-gradient(#aaa, #aaa) 9px 8px / 1px 2px no-repeat, linear-gradient(#aaa, #aaa) 27px 8px / 1px 2px no-repeat; }
.l-gap { height: 18px; background: #666; }
.menu { position: absolute; left: 349px; top: 78px; width: 152px; height: 230px; background: #f2f0ef; border: 1px solid #c8c6c4; font-size: 12px; color: #555; }
.menu button { width: 100%; height: 63px; padding-left: 16px; gap: 15px; white-space: nowrap; }
.menu svg { width: 44px; height: 32px; }
.menu .on { position: relative; background: #949494; color: #222; }
.menu .on::before { content: ""; position: absolute; left: 11px; top: 4px; width: 55px; height: 55px; border: 1px solid #e5282b; }
.menu .more { height: 30px; border-top: 1px solid #d4d2d0; padding-left: 12px; }
.menu .more svg { width: 16px; height: 16px; }
```
